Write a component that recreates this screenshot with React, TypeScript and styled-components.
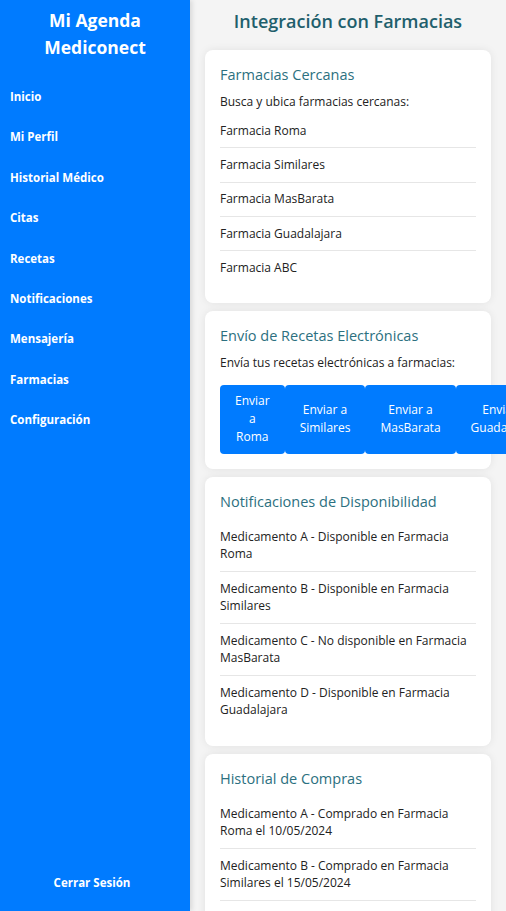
import React from 'react';
import styled, { createGlobalStyle } from 'styled-components';

const GlobalStyle = createGlobalStyle`
  * { box-sizing: border-box; }
  html, body { margin: 0; padding: 0; height: 100%; overflow: hidden; }
  body {
    font-family: "Open Sans", "Noto Sans", sans-serif;
    background: #f4f4f4;
    color: #333;
  }
`;

const Layout = styled.div`
  display: flex;
  height: 100vh;
  overflow: hidden;
`;

const Sidebar = styled.aside`
  width: 190px;
  flex-shrink: 0;
  background: #007bff;
  color: #fff;
  display: flex;
  flex-direction: column;
  padding: 7px 0 0;
  box-shadow: 2px 0 5px rgba(0, 0, 0, 0.12);
  position: relative;
  z-index: 1;
`;

const Brand = styled.h2`
  margin: 0 0 17px;
  font-size: 17.5px;
  line-height: 27px;
  font-weight: 700;
  text-align: center;
`;

const NavList = styled.ul`
  list-style: none;
  margin: 0;
  padding: 0;
  flex: 1;
`;

const NavItem = styled.li`
  padding: 10px 10px;
  margin-bottom: 3.4px;
  font-size: 11.5px;
  font-weight: 700;
  line-height: 17px;
`;

const Logout = styled.div`
  font-size: 11.5px;
  font-weight: 700;
  text-align: center;
  padding: 0 6px 20px 0;
  line-height: 17px;
`;

const Main = styled.main`
  flex: 1;
  min-width: 0;
  padding: 8px 15px 0;
  overflow: hidden;
`;

const PageTitle = styled.h1`
  margin: 0 0 15px;
  font-size: 18px;
  line-height: 27px;
  font-weight: 600;
  text-align: center;
  color: #1f5f6c;
`;

const Card = styled.section`
  background: #fff;
  border-radius: 8px;
  padding: 15px;
  margin-bottom: 8px;
  box-shadow: 0 0 8px rgba(0, 0, 0, 0.08);
`;

const CardTitle = styled.h3`
  margin: 0 0 8px;
  font-size: 14.5px;
  line-height: 20px;
  font-weight: 400;
  color: #2c7080;
`;

const Lead = styled.p<{ $after: number }>`
  margin: 0 0 ${(p) => p.$after}px;
  font-size: 12px;
  line-height: 17.5px;
  color: #222;
`;

const List = styled.ul`
  list-style: none;
  margin: 0 0 4px;
  padding: 0;
`;

const Item = styled.li`
  padding: 7.75px 0;
  font-size: 12px;
  line-height: 17.75px;
  color: #222;
  border-bottom: 1px solid #e6e6e6;

  &:last-child {
    border-bottom: none;
  }
`;

const ButtonRow = styled.div`
  display: flex;
  width: 256px;
`;

const SendButton = styled.button`
  flex: 0 0 auto;
  width: min-content;
  background: #007bff;
  color: #fff;
  border: none;
  border-radius: 4px;
  padding: 7.5px 15px;
  font-family: inherit;
  font-size: 12px;
  line-height: 18px;
  text-align: center;
`;

const nav = [
  'Inicio',
  'Mi Perfil',
  'Historial Médico',
  'Citas',
  'Recetas',
  'Notificaciones',
  'Mensajería',
  'Farmacias',
  'Configuración',
];

const pharmacies = ['Roma', 'Similares', 'MasBarata', 'Guadalajara', 'ABC'];

const availability = [
  'Medicamento A - Disponible en Farmacia Roma',
  'Medicamento B - Disponible en Farmacia Similares',
  'Medicamento C - No disponible en Farmacia MasBarata',
  'Medicamento D - Disponible en Farmacia Guadalajara',
];

const purchases = [
  'Medicamento A - Comprado en Farmacia Roma el 10/05/2024',
  'Medicamento B - Comprado en Farmacia Similares el 15/05/2024',
  'Medicamento C - Comprado en Farmacia MasBarata el 20/05/2024',
];

export default function App() {
  return (
    <>
      <GlobalStyle />
      <Layout>
        <Sidebar>
          <Brand>
            Mi Agenda
            <br />
            Mediconect
          </Brand>
          <NavList>
            {nav.map((n) => (
              <NavItem key={n}>{n}</NavItem>
            ))}
          </NavList>
          <Logout>Cerrar Sesión</Logout>
        </Sidebar>
        <Main>
          <PageTitle>Integración con Farmacias</PageTitle>

          <Card>
            <CardTitle>Farmacias Cercanas</CardTitle>
            <Lead $after={3.5}>Busca y ubica farmacias cercanas:</Lead>
            <List>
              {pharmacies.map((p) => (
                <Item key={p}>Farmacia {p}</Item>
              ))}
            </List>
          </Card>

          <Card>
            <CardTitle>Envío de Recetas Electrónicas</CardTitle>
            <Lead $after={13}>Envía tus recetas electrónicas a farmacias:</Lead>
            <ButtonRow>
              {pharmacies.slice(0, 4).map((p) => (
                <SendButton key={p}>Enviar a {p}</SendButton>
              ))}
            </ButtonRow>
          </Card>

          <Card>
            <CardTitle>Notificaciones de Disponibilidad</CardTitle>
            <List>
              {availability.map((a) => (
                <Item key={a}>{a}</Item>
              ))}
            </List>
          </Card>

          <Card>
            <CardTitle>Historial de Compras</CardTitle>
            <List>
              {purchases.map((a) => (
                <Item key={a}>{a}</Item>
              ))}
            </List>
          </Card>
        </Main>
      </Layout>
    </>
  );
}
